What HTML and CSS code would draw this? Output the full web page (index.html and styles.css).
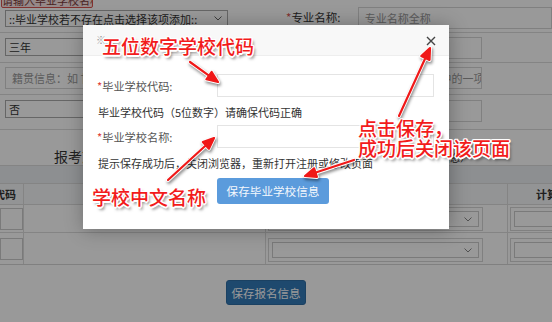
FILE: index.html
```html
<!DOCTYPE html>
<html lang="zh-CN">
<head>
<meta charset="utf-8">
<title>毕业学校信息</title>
<link rel="stylesheet" href="styles.css">
</head>
<body>
<div class="page">
  <div class="form-rows">
    <div class="frow row-a">
      <div class="fcell left">
        <div class="tip">请输入毕业学校名称</div>
        <div class="select sel-school">::毕业学校若不存在点击选择该项添加::<svg class="chev" width="8" height="5" viewBox="0 0 8 5"><path d="M0.5 0.5 L4 4 L7.5 0.5" fill="none" stroke="#666" stroke-width="1"/></svg></div>
      </div>
      <div class="fcell right">
        <span class="flabel"><i>*</i>专业名称:</span>
        <div class="input ph">专业名称全称</div>
      </div>
    </div>
    <div class="frow row-b">
      <div class="fcell left"><div class="select wide">三年</div></div>
      <div class="fcell right"><div class="input wide-in"></div></div>
    </div>
    <div class="frow row-c">
      <div class="fcell left"><div class="input wide ph">籍贯信息：如 甘肃省兰州市</div></div>
      <div class="fcell right"><div class="input wide-in ph shift">身体状况：良好、一般、较差 中的一项</div></div>
    </div>
    <div class="frow row-d">
      <div class="fcell left"><div class="select wide">否</div></div>
      <div class="fcell right"><div class="input wide-in"></div></div>
    </div>
  </div>

  <div class="title-row">
    <h2 class="sec-title">报考志愿信息</h2>
    <span class="sec-note">（请认真填写志愿信息）</span>
  </div>

  <div class="vtable">
    <div class="vband"></div>
    <div class="vrow vhead">
      <div class="vc c0"><b class="h0">代码</b></div>
      <div class="vc"></div>
      <div class="vc"></div>
      <div class="vc c3"><b class="h3">计算机</b></div>
    </div>
    <div class="vrow r1">
      <div class="vc c0"><div class="tinput"></div></div>
      <div class="vc"></div>
      <div class="vc"><div class="tbox"><div class="tsel"><svg class="chev" width="8" height="5" viewBox="0 0 8 5"><path d="M0.5 0.5 L4 4 L7.5 0.5" fill="none" stroke="#888" stroke-width="1"/></svg></div></div></div>
      <div class="vc c3"><div class="tbox"><div class="tsel"></div></div></div>
    </div>
    <div class="vrow r2">
      <div class="vc c0"><div class="tinput"></div></div>
      <div class="vc"></div>
      <div class="vc"><div class="tbox"><div class="tsel"><svg class="chev" width="8" height="5" viewBox="0 0 8 5"><path d="M0.5 0.5 L4 4 L7.5 0.5" fill="none" stroke="#888" stroke-width="1"/></svg></div></div></div>
      <div class="vc c3"><div class="tbox"><div class="tsel"></div></div></div>
    </div>
  </div>

  <div class="btn-row"><span class="save-btn">保存报名信息</span></div>

  <div class="overlay"></div>

  <div class="modal">
    <div class="modal-head">
      <span class="mh-icon">※</span>
      <svg class="mh-close" width="10" height="10" viewBox="0 0 10 10"><path d="M1 1 L9 9 M9 1 L1 9" stroke="#444" stroke-width="1.4" fill="none"/></svg>
    </div>
    <div class="modal-body">
      <div class="mrow"><label class="mlabel"><i>*</i>毕业学校代码:</label><div class="minput"></div></div>
      <p class="mhelp first">毕业学校代码（5位数字）请确保代码正确</p>
      <div class="mrow"><label class="mlabel"><i>*</i>毕业学校名称:</label><div class="minput"></div></div>
      <p class="mhelp">提示保存成功后，关闭浏览器，重新打开注册或修改页面</p>
      <div class="mbtn-row"><span class="mbtn">保存毕业学校信息</span></div>
    </div>
  </div>

  <svg class="arrows" width="552" height="322" viewBox="0 0 552 322">
    <defs>
      <path id="a1" d="M190 62 L210 76.3 M206.4 79.3 L218 82 L211.7 72 Z"/>
      <path id="a2" d="M168 180 L206.5 144.8 M208.9 148.7 L214 138 L202.9 142.1 Z"/>
      <path id="a3" d="M399 116 L425.6 57.5 M429.5 59.9 L430 48 L421.3 56.1 Z"/>
      <path id="a4" d="M354 160 L315 172.8 M314.1 168.4 L305 176 L316.9 176.9 Z"/>
    </defs>
    <g fill="#fff" stroke="#fff" stroke-width="4" stroke-linejoin="round" stroke-linecap="round">
      <use href="#a1"/><use href="#a2"/><use href="#a3"/><use href="#a4"/>
    </g>
    <g fill="#f01818" stroke="#f01818" stroke-width="2.2" stroke-linejoin="round" stroke-linecap="round">
      <use href="#a1"/><use href="#a2"/><use href="#a3"/><use href="#a4"/>
    </g>
  </svg>

  <div class="note n1">五位数字学校代码</div>
  <div class="note n2">学校中文名称</div>
  <div class="note n3">点击保存，<br>成功后关闭该页面</div>
</div>
</body>
</html>
```

FILE: styles.css
```css
* { box-sizing: border-box; margin: 0; padding: 0; }
html, body { width: 552px; height: 322px; overflow: hidden; }
body {
  font-family: "Noto Sans CJK SC", "Microsoft YaHei", sans-serif;
  font-size: 11px;
  color: #333;
  background: #fff;
}
.page { position: relative; width: 552px; height: 322px; overflow: hidden; background: #fff; }

/* background form */
.frow { display: grid; grid-template-columns: 282px 270px; border-bottom: 1px solid #dcdcdc; }
.fcell { display: flex; align-items: flex-start; position: relative; }
.fcell.left { padding-left: 5px; }
.row-a { height: 33px; }
.row-a .left { padding-top: 10px; }
.row-a .right { padding-top: 7px; }
.row-b { height: 30px; }
.row-b .left { padding-top: 5px; }
.row-b .right { padding-top: 4px; }
.row-c { height: 32px; }
.row-c .fcell { padding-top: 4px; }
.row-d { height: 35px; }
.row-d .left { padding-top: 5px; }
.row-d .right { padding-top: 5px; }

.select {
  height: 18px; border: 1px solid #aaa; background: #fff;
  line-height: 16px; padding-left: 3px; white-space: nowrap; overflow: hidden;
  display: flex; align-items: center; justify-content: space-between; padding-right: 5px;
}
.sel-school { width: 223px; height: 17px; }
.select.wide { width: 270px; }
.chev { flex: none; }
.input {
  height: 22px; border: 1px solid #d6d6d6; background: #fff;
  line-height: 20px; padding-left: 6px; white-space: nowrap; overflow: hidden;
}
.right .input { width: 200px; }
.input.wide { width: 270px; }
.input.ph { color: #999; }
.input.shift { padding-left: 12px; }
.flabel { width: 78px; padding-left: 4px; line-height: 20px; color: #333; font-size: 11.5px; }
.flabel i { color: #d9534f; font-style: normal; }

.tip {
  position: absolute; left: 1px; top: -7px; width: 92px; height: 15px;
  border: 1px solid #d9534f; background: #fbe3e3; color: #7a3a3a;
  font-size: 11px; line-height: 13px; text-align: center; border-radius: 2px; white-space: nowrap; overflow: hidden;
}
.tip::after {
  content: ""; position: absolute; left: 35px; bottom: -5px;
  border-left: 4px solid transparent; border-right: 4px solid transparent; border-top: 5px solid #d9534f;
}

.title-row { height: 35px; display: flex; align-items: flex-end; padding-left: 54px; padding-right: 82px; justify-content: space-between; }
.sec-title { font-size: 14px; font-weight: normal; line-height: 18px; color: #333; }
.sec-note { font-size: 10px; line-height: 12px; color: #333; margin-bottom: 1px; }

.vtable { border-bottom: 1px solid #d6d6d6; }
.vband { height: 19px; background: #eceff2; border-top: 1px solid #dcdcdc; border-bottom: 1px solid #dcdcdc; }
.vrow { display: grid; grid-template-columns: 24px 242px 242px 44px; }
.vhead { height: 21px; background: #f6f7f8; border-bottom: 1px solid #dcdcdc; }
.r1 { height: 28px; border-bottom: 1px solid #dcdcdc; }
.r2 { height: 31px; }
.vc { border-right: 1px solid #dcdcdc; overflow: hidden; white-space: nowrap; }
.vc.c3 { border-right: 0; }
.vhead b { font-weight: bold; font-size: 11px; line-height: 20px; display: block; }
.h0 { margin-left: -6px; }
.h3 { padding-left: 28px; }
.tinput { height: 22px; width: 23px; border: 1px solid #ccc; background: #fff; margin-top: 3px; }
.tbox { height: 24px; margin-left: 2px; margin-top: 2px; border: 1px solid #d6d6d6; padding: 3px 3px; width: 215px; background: #fff; }
.r2 .tbox, .r2 .tinput { margin-top: 5px; }
.c3 .tbox { width: 60px; }
.tsel { height: 16px; border: 1px solid #ccc; display: flex; justify-content: flex-end; align-items: center; padding-right: 6px; }

.btn-row { padding-left: 226px; padding-top: 15px; }
.save-btn {
  display: inline-block; width: 80px; height: 25px; line-height: 25px; text-align: center;
  background: #337ab7; color: #fff; border: 1px solid #2e6da4; border-radius: 3px; font-size: 11.5px;
}

.overlay { position: absolute; inset: 0; background: rgba(0, 0, 0, 0.4); }

/* modal */
.modal {
  position: absolute; left: 83px; top: 25px; width: 366px; height: 204px;
  background: #fff; box-shadow: 1px 1px 18px rgba(0, 0, 0, 0.3);
}
.modal-head {
  height: 31px; background: #f8f8f8; border-bottom: 1px solid #eee;
  display: flex; align-items: center; justify-content: space-between; padding: 0 13px 0 13px;
}
.mh-icon { color: #999; font-size: 10px; line-height: 12px; }
.mh-close { display: block; margin-top: 1px; }
.modal-body { padding: 18px 15px 0 14px; }
.mrow { display: flex; align-items: center; height: 23px; }
.mlabel { width: 120px; color: #555; font-size: 11.2px; line-height: 16px; }
.mlabel i { color: #e0433a; font-style: normal; }
.minput { flex: 1; height: 23px; border: 1px solid #e4e4e4; background: #fff; }
.mhelp { line-height: 16px; font-size: 11px; color: #333; margin: 7px 0 5px 1px; white-space: nowrap; }
.mbtn-row { padding-left: 120px; margin-top: 7px; }
.mbtn {
  display: inline-block; width: 112px; height: 26px; line-height: 26px; text-align: center;
  background: #5b9bdc; color: #f4f8fd; border-radius: 3px; font-size: 11.6px;
}

/* annotations */
.arrows { position: absolute; left: 0; top: 0; filter: drop-shadow(1px 2px 1.5px rgba(0, 0, 0, 0.45)); }
.note {
  position: absolute; color: #f21b1b; font-size: 19px; line-height: 19px; font-weight: 500; white-space: nowrap;
  text-shadow: -1px -1px 0 #fff, 1px -1px 0 #fff, -1px 1px 0 #fff, 1px 1px 0 #fff,
               0 -1.5px 0 #fff, 0 1.5px 0 #fff, -1.5px 0 0 #fff, 1.5px 0 0 #fff,
               2px 3px 3px rgba(0, 0, 0, 0.55);
}
.n1 { left: 102px; top: 36px; }
.n2 { left: 92px; top: 187px; }
.n3 { left: 358px; top: 118px; line-height: 19.5px; }
```
